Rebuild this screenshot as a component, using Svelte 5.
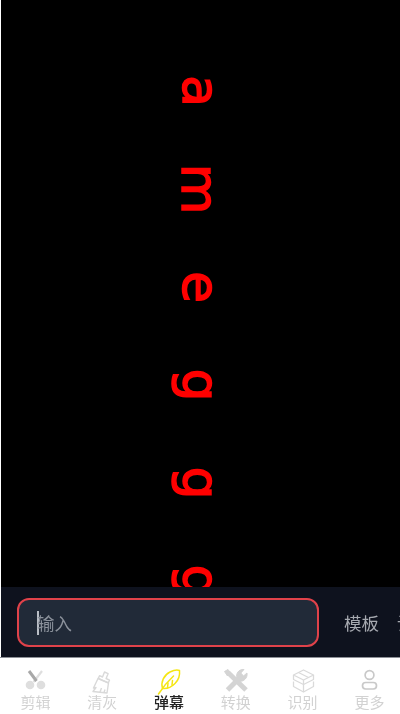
<script>
  const letters = ["a", "m", "e", "g", "g", "g"];
  const tabs = [
    { key: "cut", label: "剪辑" },
    { key: "clean", label: "清灰" },
    { key: "danmu", label: "弹幕", active: true },
    { key: "convert", label: "转换" },
    { key: "scan", label: "识别" },
    { key: "more", label: "更多" }
  ];
</script>

<div class="page">
  <main class="stage">
    {#each letters as letter}
      <div class="cell"><span class="letter">{letter}</span></div>
    {/each}
  </main>

  <div class="composer">
    <div class="field"><i class="caret"></i><span>输入</span></div>
    <span class="template">模板</span>
    <span class="clipped">设</span>
  </div>

  <nav class="tabs">
    {#each tabs as tab}
      <div class="tab" class:active={tab.active}>
        <svg viewBox="0 0 28 26" width="28" height="26" aria-hidden="true">
          {#if tab.key === "cut"}
            <circle cx="9" cy="17" r="4.300" fill="#dedede" />
            <circle cx="20" cy="17" r="4.300" fill="#dedede" />
            <path d="M21 3 12.500 14" stroke="#dedede" stroke-width="2.200" fill="none" />
            <path d="M8 3 15.500 13" stroke="#a8a8a8" stroke-width="3" fill="none" />
          {:else if tab.key === "clean"}
            <g fill="none" stroke="#d9d9d9" stroke-width="1.400" stroke-linejoin="round">
              <path d="M16.500 4l3.600 1.700-2 4.800 3.400 1.700-1.200 2.600-10-4.400 1.200-2.700 3 1.300z" />
              <path d="M10 10.500 20.500 15 19 25 5 23.500 8 19.500 5.500 20z" />
              <path d="M12 24l1.500-4M16 24.500l1-3" />
            </g>
          {:else if tab.key === "danmu"}
            <g fill="none" stroke="#f5e614" stroke-width="1.500" stroke-linecap="round" stroke-linejoin="round">
              <path d="M7.500 20.500C5.500 14 9 7 15 4c3-1.500 7-2.500 9.500-1.500.5 4.500-1 9.500-4.500 13-3.500 3.500-8 5.500-12.500 5z" />
              <path d="M3.500 26C8 19 12 14 18.500 8" />
              <path d="M12.500 20l.5-5M17 17l.5-4.500" />
            </g>
          {:else if tab.key === "convert"}
            <g stroke="#d4d4d4" fill="none">
              <path d="M6 4.500 24 22" stroke-width="5" />
              <path d="M2.500 3.500 6 1.500 8.500 5 5.500 8z" fill="#d4d4d4" stroke-width="1" />
              <path d="M5.500 22 17.500 10" stroke-width="5" />
              <path d="M15 10c-1.500-4 1.500-9 7-8.500L18.800 5l2.700 3 3.500-3c.8 5-3.500 9-7.500 8z" fill="#d4d4d4" stroke-width="1" />
            </g>
          {:else if tab.key === "scan"}
            <g fill="none" stroke="#dadada" stroke-width="1.300" stroke-linejoin="round">
              <path d="M14.500 2 24.500 7 14.500 12 4.500 7z" />
              <path d="M4.500 7v4.500l10 5 10-5V7" />
              <path d="M4.500 13.500v5l10 5.500 10-5.500v-5" />
              <path d="M14.500 12v12M9.500 4.500l10 5" />
            </g>
          {:else}
            <g fill="none" stroke="#c9c9c9" stroke-width="1.700">
              <circle cx="14.500" cy="7" r="4.400" />
              <rect x="7.500" y="14.500" width="14" height="6.500" rx="3.200" />
            </g>
          {/if}
        </svg>
        <span class="label">{tab.label}</span>
      </div>
    {/each}
  </nav>
</div>

<style>
  :global(body) {
    margin: 0;
    background: #fff;
  }
  .page {
    width: 400px;
    height: 714px;
    display: flex;
    flex-direction: column;
    overflow: hidden;
    font-family: "Noto Sans CJK SC", "Liberation Sans", sans-serif;
    box-sizing: border-box;
    padding: 0 0 0 1px;
    filter: blur(0.4px);
  }
  .stage {
    flex: 1;
    min-height: 0;
    background: #000;
    overflow: hidden;
    padding-top: 42px;
    display: flex;
    flex-direction: column;
    align-items: center;
  }
  .cell {
    flex: 0 0 98px;
    height: 98px;
    width: 100%;
    display: flex;
    align-items: center;
    justify-content: center;
  }
  .letter {
    display: block;
    color: #ff0000;
    font-family: "DejaVu Sans", sans-serif;
    font-size: 52px;
    line-height: 1;
    -webkit-text-stroke: 1.500px #ff0000;
    transform: rotate(90deg);
  }
  .composer {
    flex: 0 0 70px;
    box-sizing: border-box;
    padding-top: 1px;
    background: #0e121e;
    display: flex;
    align-items: center;
    padding-left: 16px;
    overflow: hidden;
    white-space: nowrap;
  }
  .field {
    flex: 0 0 302px;
    box-sizing: border-box;
    height: 49px;
    border: 2px solid #e0424a;
    border-radius: 12px;
    background: #212a38;
    display: flex;
    align-items: center;
    padding-left: 18px;
    color: #8b919b;
    font-size: 17.5px;
  }
  .caret {
    width: 1.500px;
    height: 24px;
    background: #b9bec6;
    margin-right: -1.500px;
  }
  .template {
    margin-left: 25px;
    color: #a6a9b0;
    font-size: 17.500px;
  }
  .clipped {
    margin-left: 18px;
    color: #a6a9b0;
    font-size: 17.500px;
  }
  .tabs {
    flex: 0 0 56px;
    background: #fff;
    border-top: 1px solid #8d9097;
    margin-left: -1px;
    display: grid;
    grid-template-columns: repeat(6, 66.800px);
    padding-left: 2px;
  }
  .tab {
    display: flex;
    flex-direction: column;
    align-items: center;
    padding-top: 10px;
  }
  .tab svg {
    display: block;
    overflow: visible;
  }
  .label {
    font-size: 15px;
    line-height: 18px;
    margin-top: -1px;
    color: #d2d2d2;
    white-space: nowrap;
  }
  .active .label {
    color: #222;
    font-weight: 500;
  }
</style>
